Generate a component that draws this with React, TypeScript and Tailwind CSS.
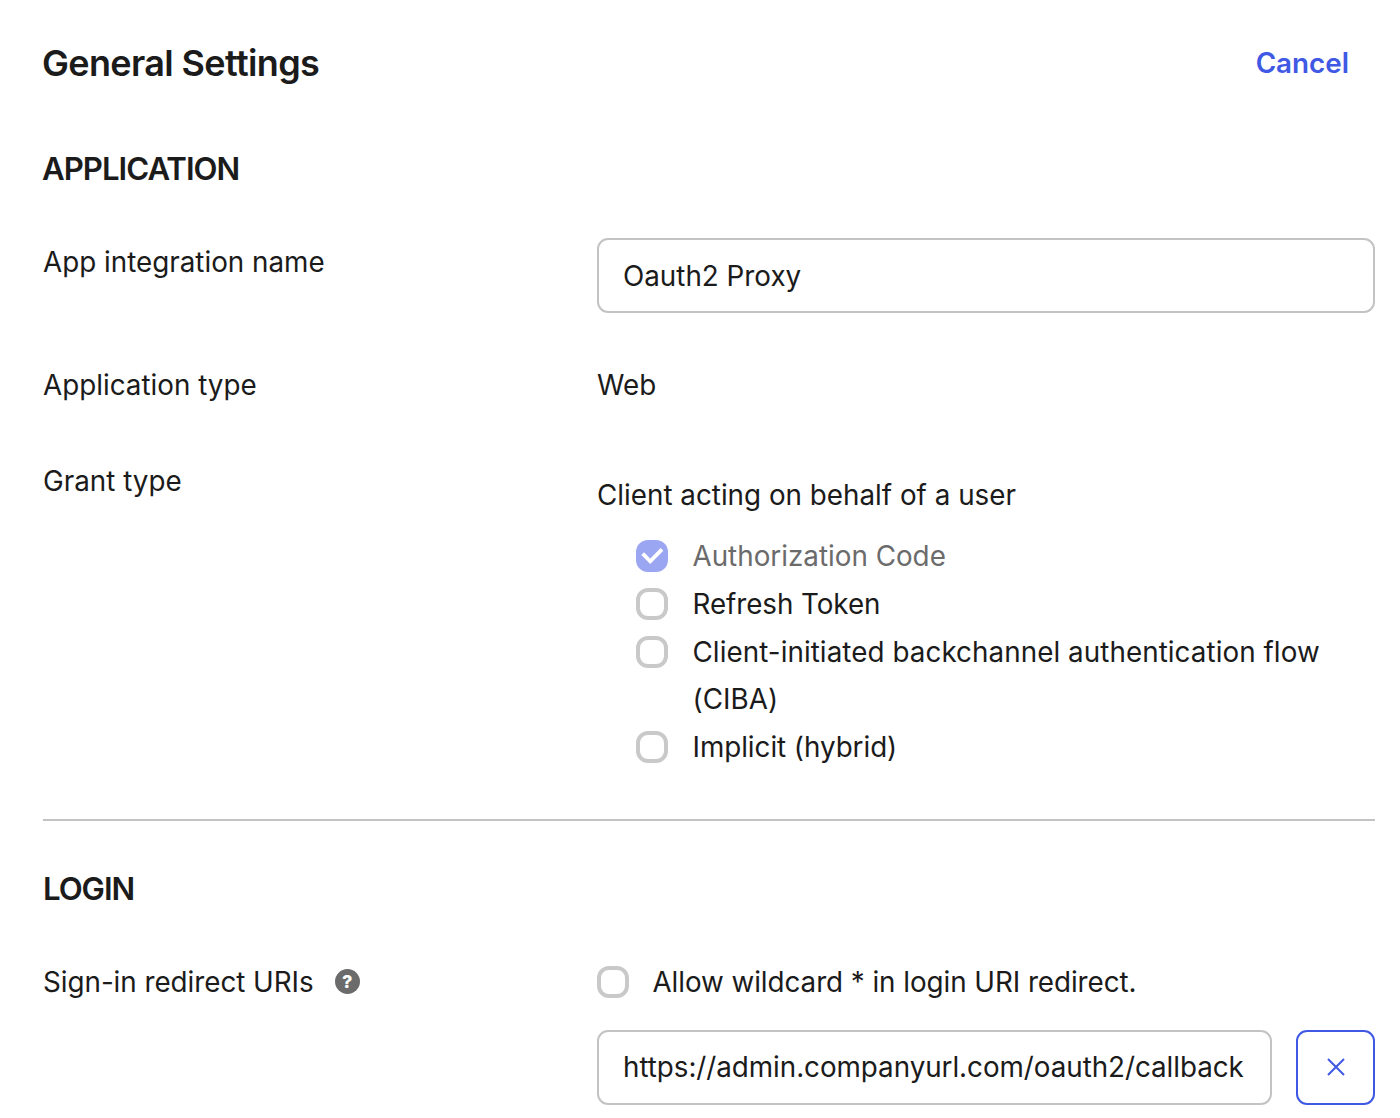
import React from "react";

function Box({ checked = false }: { checked?: boolean }) {
  return (
    <span
      className={
        checked
          ? "mt-2 flex size-8 shrink-0 items-center justify-center rounded-[12px] bg-[#9aa6f1]"
          : "mt-2 block size-8 shrink-0 rounded-[12px] border-4 border-[#c9c9c9] bg-white"
      }
    >
      {checked && (
        <svg width="32" height="32" viewBox="0 0 32 32" fill="none" stroke="#fff" strokeWidth="3.8">
          <path d="M6.7 13.7 L14.2 21.4 L26 9.4" />
        </svg>
      )}
    </span>
  );
}

function Option({ text, checked = false, className = "" }: { text: string; checked?: boolean; className?: string }) {
  return (
    <label className={`flex leading-[47.75px] ${className}`}>
      <Box checked={checked} />
      <span className={checked ? "mt-px -mb-px text-[#6b6b6b]" : "mt-px -mb-px"}>{text}</span>
    </label>
  );
}

const label = "w-[554px] shrink-0";
const field = "flex h-[75px] items-center rounded-[11px] border-2 border-[#c3c3c3] pl-6";

export default function App() {
  return (
    <main className="h-[1118px] w-[1400px] overflow-hidden bg-white pl-[43px] pr-[25px] font-['Inter',sans-serif] text-[27.8px] leading-[48px] text-[#1b1b1b]">
      <header className="flex h-[128px] justify-between pt-[39px] pr-[26px]">
        <h1 className="-ml-px text-[36px] font-semibold tracking-[-0.64px]">General Settings</h1>
        <a className="font-semibold text-[#3f59e4]">Cancel</a>
      </header>
      <h2 className="-ml-px h-[110px] pt-[17px] text-[31.2px] font-semibold tracking-[-1px]">APPLICATION</h2>
      <div className="flex h-[123px]">
        <div className={label}>App integration name</div>
        <div className={`${field} w-[778px]`}>Oauth2 Proxy</div>
      </div>
      <div className="flex h-[96px]">
        <div className={label}>Application type</div>
        <div>Web</div>
      </div>
      <div className="flex h-[364px] border-b-2 border-[#c3c3c3]">
        <div className={label}>Grant type</div>
        <div className="pt-[14px]">
          <div>Client acting on behalf of a user</div>
          <div className="w-[740px] pt-[13px] pl-[39px]">
            <Option text="Authorization Code" checked className="gap-[24.5px]" />
            <Option text="Refresh Token" className="gap-[24.5px] tracking-[-0.07px]" />
            <Option
              text="Client-initiated backchannel authentication flow (CIBA)"
              className="gap-[24.5px] tracking-[0.06px]"
            />
            <Option text="Implicit (hybrid)" className="gap-[24.5px] tracking-[-0.05px]" />
          </div>
        </div>
      </div>
      <h2 className="h-[137px] pt-[44px] text-[31.2px] font-semibold tracking-[-1.05px]">LOGIN</h2>
      <div className="flex">
        <div className={`${label} flex gap-[21px] tracking-[-0.04px]`}>
          <span>Sign-in redirect URIs</span>
          <span className="mt-[11px] flex size-[25px] items-center justify-center rounded-full bg-[#6b6b6b] text-[18px] leading-none font-extrabold text-white">
            ?
          </span>
        </div>
        <div>
          <Option text="Allow wildcard * in login URI redirect." className="gap-[23.5px] tracking-[-0.06px]" />
          <div className="flex gap-[24px] pt-[24px]">
            <div className={`${field} w-[675px] tracking-[-0.05px]`}>https://admin.companyurl.com/oauth2/callback</div>
            <button className="flex h-[75px] w-[79px] items-center justify-center rounded-[11px] border-2 border-[#3f59e4]">
              <svg width="18" height="18" viewBox="0 0 18 18" fill="none" stroke="#3f59e4" strokeWidth="2">
                <path d="M1 1 L17 17 M17 1 L1 17" />
              </svg>
            </button>
          </div>
        </div>
      </div>
    </main>
  );
}
